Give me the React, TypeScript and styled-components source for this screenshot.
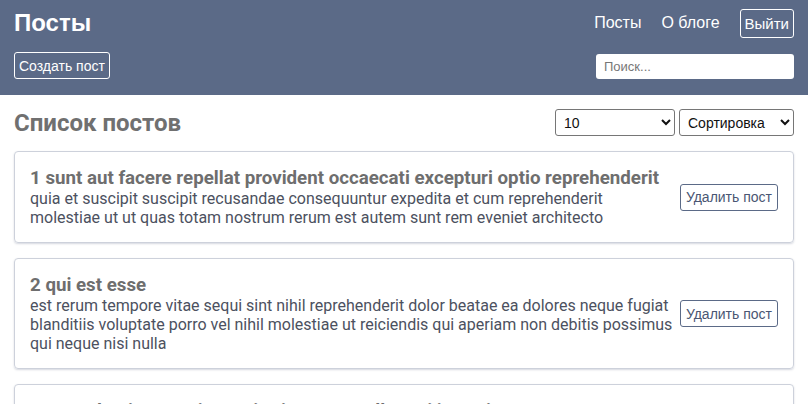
import React, { useState } from "react";
import styled, { createGlobalStyle } from "styled-components";

const GlobalStyle = createGlobalStyle`
  body {
    margin: 0;
    background: #fff;
    font-family: "Liberation Sans", Arial, sans-serif;
  }
  * {
    box-sizing: border-box;
  }
`;

const Header = styled.header`
  background-color: #5b6a87;
  padding: 8px 14px 16px 14px;
  color: #fff;
`;

const HeaderRow = styled.div<{ top?: boolean }>`
  display: flex;
  justify-content: space-between;
  align-items: center;
  height: ${(props) => (props.top ? "30px" : "27px")};
  margin-top: ${(props) => (props.top ? "0" : "14px")};
`;

const Logo = styled.h1`
  margin: 0;
  font-size: 24px;
  font-weight: bold;
  font-family: "Liberation Sans", Arial, sans-serif;
`;

const Nav = styled.nav`
  display: flex;
  align-items: center;
  gap: 20px;
  a {
    color: #fff;
    text-decoration: none;
    font-size: 16px;
  }
`;

const OutlineButton = styled.button<{ size?: number; h: number }>`
  height: ${(props) => props.h}px;
  background: transparent;
  color: #fff;
  border: 1px solid #fff;
  border-radius: 3px;
  padding: 0 4px;
  font-family: "Liberation Sans", Arial, sans-serif;
  font-size: ${(props) => props.size || 14}px;
  cursor: pointer;
`;

const Search = styled.input`
  width: 198px;
  height: 25px;
  margin-top: 2px;
  border: 0;
  border-radius: 3px;
  padding: 0 8px;
  font-family: "Liberation Sans", Arial, sans-serif;
  font-size: 13px;
  &::placeholder {
    color: #777;
  }
`;

const Main = styled.main`
  padding: 12px 14px 0 14px;
  font-family: Roboto, "Liberation Sans", sans-serif;
`;

const Toolbar = styled.div`
  display: flex;
  justify-content: space-between;
  align-items: center;
  height: 31px;
  margin-bottom: 13px;
`;

const Heading = styled.h2`
  margin: 0;
  font-size: 24px;
  font-weight: bold;
  color: #707070;
`;

const Selects = styled.div`
  display: flex;
  gap: 4px;
`;

const Select = styled.select<{ w: number }>`
  width: ${(props) => props.w}px;
  height: 27px;
  border: 1px solid #767676;
  border-radius: 3px;
  background: #fff;
  padding: 0 4px;
  font-family: "Liberation Sans", Arial, sans-serif;
  font-size: 14px;
  color: #111;
`;

const Card = styled.article`
  display: flex;
  justify-content: space-between;
  align-items: center;
  width: 780px;
  padding: 15px;
  border: 1px solid #cdd1db;
  border-radius: 4px;
  box-shadow: 0 1px 2px rgba(90, 100, 130, 0.25);
  margin-bottom: 15px;
`;

const CardText = styled.div`
  flex: 1;
  min-width: 0;
`;

const CardTitle = styled.h3`
  margin: 0;
  font-size: 18.72px;
  font-weight: bold;
  color: #6e6e6e;
`;

const CardBody = styled.div`
  font-size: 16px;
  color: #4c5160;
`;

const DeleteButton = styled.button`
  flex-shrink: 0;
  margin-left: 4px;
  height: 27px;
  background: #fff;
  color: #4a5673;
  border: 1px solid #5b6a87;
  border-radius: 3px;
  padding: 0 5px;
  font-family: "Liberation Sans", Arial, sans-serif;
  font-size: 14px;
  cursor: pointer;
`;

const initialPosts = [
  {
    id: 1,
    title: "sunt aut facere repellat provident occaecati excepturi optio reprehenderit",
    body: "quia et suscipit suscipit recusandae consequuntur expedita et cum reprehenderit molestiae ut ut quas totam nostrum rerum est autem sunt rem eveniet architecto",
  },
  {
    id: 2,
    title: "qui est esse",
    body: "est rerum tempore vitae sequi sint nihil reprehenderit dolor beatae ea dolores neque fugiat blanditiis voluptate porro vel nihil molestiae ut reiciendis qui aperiam non debitis possimus qui neque nisi nulla",
  },
  {
    id: 3,
    title: "ea molestias quasi exercitationem repellat qui ipsa sit aut",
    body: "et iusto sed quo iure voluptatem occaecati omnis eligendi aut ad voluptatem doloribus vel accusantium quis pariatur molestiae porro eius odio et labore et velit aut",
  },
];

function App() {
  const [posts, setPosts] = useState(initialPosts);
  const [limit, setLimit] = useState("10");
  const [sort, setSort] = useState("");

  const removePost = (id: number) => {
    setPosts(posts.filter((p) => p.id !== id));
  };

  return (
    <>
      <GlobalStyle />
      <Header>
        <HeaderRow top>
          <Logo>Посты</Logo>
          <Nav>
            <a href="#">Посты</a>
            <a href="#">О блоге</a>
            <OutlineButton size={15} h={29}>
              Выйти
            </OutlineButton>
          </Nav>
        </HeaderRow>
        <HeaderRow>
          <OutlineButton h={27}>Создать пост</OutlineButton>
          <Search placeholder="Поиск..." />
        </HeaderRow>
      </Header>
      <Main>
        <Toolbar>
          <Heading>Список постов</Heading>
          <Selects>
            <Select w={120} value={limit} onChange={(e) => setLimit(e.target.value)}>
              <option value="5">5</option>
              <option value="10">10</option>
              <option value="25">25</option>
              <option value="-1">Все</option>
            </Select>
            <Select w={115} value={sort} onChange={(e) => setSort(e.target.value)}>
              <option value="" disabled>
                Сортировка
              </option>
              <option value="title">По названию</option>
              <option value="body">По описанию</option>
            </Select>
          </Selects>
        </Toolbar>
        {posts.map((post) => (
          <Card key={post.id}>
            <CardText>
              <CardTitle>
                {post.id} {post.title}
              </CardTitle>
              <CardBody>{post.body}</CardBody>
            </CardText>
            <DeleteButton onClick={() => removePost(post.id)}>Удалить пост</DeleteButton>
          </Card>
        ))}
      </Main>
    </>
  );
}

export default App;
